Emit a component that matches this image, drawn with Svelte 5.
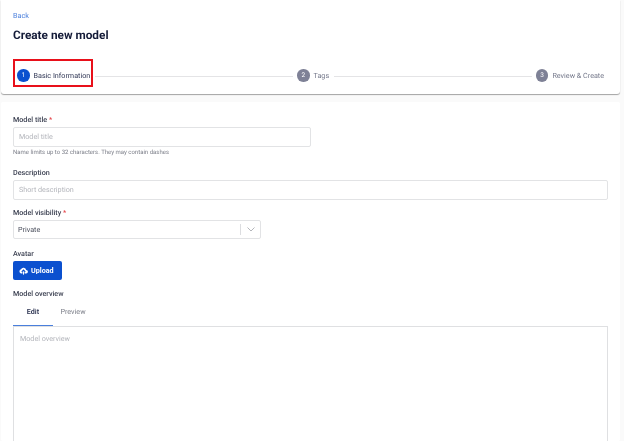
<script>
  const steps = [
    { n: 1, label: 'Basic Information', active: true },
    { n: 2, label: 'Tags' },
    { n: 3, label: 'Review & Create' }
  ]
</script>

<div class="page">
  <header class="head">
    <a class="back" href="#back">Back</a>
    <h1>Create new model</h1>
    <div class="stepper">
      {#each steps as step, i}
        {#if i > 0}<span class="line"></span>{/if}
        <div class="step" class:active={step.active}>
          <span class="num">{step.n}</span>
          <span class="label">{step.label}</span>
          {#if step.active}<span class="highlight"></span>{/if}
        </div>
      {/each}
    </div>
  </header>

  <main class="form">
    <div class="label-row">Model title <em>*</em></div>
    <div class="input title">Model title</div>
    <div class="hint">Name limits up to 32 characters. They may contain dashes</div>

    <div class="label-row desc">Description</div>
    <div class="input">Short description</div>

    <div class="label-row vis">Model visibility <em>*</em></div>
    <div class="select">
      <span class="value">Private</span>
      <span class="sep"></span>
      <svg class="chev" width="8" height="5" viewBox="0 0 8 5"><path d="M.5.5 4 4 7.5.5" fill="none" stroke="#b4b6bb" stroke-width="1"/></svg>
    </div>

    <div class="label-row avatar">Avatar</div>
    <button class="upload" type="button">
      <svg width="9" height="8" viewBox="0 0 24 22"><path d="M19.400 8A7.500 7.500 0 0 0 5.200 6.300 6 6 0 0 0 6 18h3v-5H5.500L12 6.500 18.500 13H15v5h4a5 5 0 0 0 .4-10z" fill="#fff"/><rect x="10.500" y="12" width="3" height="9" fill="#fff"/></svg>
      Upload
    </button>

    <div class="label-row overview">Model overview</div>
    <div class="tabs">
      <span class="tab on">Edit</span>
      <span class="tab">Preview</span>
    </div>
    <div class="editor">Model overview</div>
  </main>
</div>

<style>
  :global(body) {
    margin: 0;
    background: #fafafa;
    overflow: hidden;
  }

  .page {
    width: 624px;
    height: 441px;
    overflow: hidden;
    font-family: Roboto, "Liberation Sans", sans-serif;
    font-size: 7.2px;
    color: #3d4354;
    text-rendering: geometricPrecision;
    will-change: transform;
  }

  .head {
    width: 619px;
    height: 94px;
    margin-left: 1px;
    box-sizing: border-box;
    padding: 10.5px 16px 0 12px;
    background: #fff;
    border-radius: 0 0 3px 3px;
    box-shadow: 0 1px 1px rgba(0, 0, 0, 0.35);
  }

  .back {
    display: block;
    height: 10px;
    line-height: 10px;
    color: #4a7fdc;
    text-decoration: none;
    font-size: 7.2px;
  }

  h1 {
    margin: 6px 0 0;
    font-size: 11.8px;
    line-height: 16px;
    font-weight: 700;
    color: #141b38;
  }

  .stepper {
    display: flex;
    align-items: center;
    margin-top: 26.5px;
    padding-left: 4px;
  }

  .step {
    position: relative;
    display: flex;
    align-items: center;
    gap: 4px;
    color: #74788a;
  }

  .step.active {
    color: #2f3654;
  }

  .num {
    width: 12.5px;
    height: 12.5px;
    border-radius: 50%;
    background: #7e8196;
    color: #fff;
    font-size: 6.5px;
    display: flex;
    align-items: center;
    justify-content: center;
  }

  .active .num {
    background: #0b50cf;
  }

  .highlight {
    position: absolute;
    left: -4.5px;
    top: -10px;
    width: 76px;
    height: 24px;
    border: 2px solid #e8101a;
  }

  .line {
    flex: 1;
    height: 1.5px;
    margin: 2px 4px 0 5px;
    background: #e4e4e6;
  }

  .form {
    width: 619px;
    height: 339px;
    margin: 8px 0 0 1px;
    box-sizing: border-box;
    padding: 12px 12px 0;
    background: #fff;
    border-radius: 2px;
  }

  .label-row {
    height: 11px;
    line-height: 11px;
    color: #3a3f50;
    font-weight: 500;
  }

  .label-row em {
    color: #e5484d;
    font-style: normal;
  }

  .input {
    height: 20px;
    margin-top: 2px;
    box-sizing: border-box;
    padding-left: 5px;
    line-height: 18px;
    border: 1px solid #e2e3e5;
    border-radius: 2px;
    color: #b3b5bb;
  }

  .input.title {
    width: 298px;
  }

  .hint {
    margin-top: 2px;
    font-size: 6px;
    line-height: 8px;
    color: #7b7e88;
  }

  .desc {
    margin-top: 10px;
  }

  .vis {
    margin-top: 7px;
  }

  .select {
    width: 248px;
    height: 19px;
    margin-top: 2px;
    box-sizing: border-box;
    display: flex;
    align-items: center;
    padding: 0 5px 0 4px;
    border: 1px solid #e2e3e5;
    border-radius: 2px;
  }

  .value {
    flex: 1;
    color: #4a4e5c;
  }

  .sep {
    width: 1px;
    height: 11px;
    background: #dcdde0;
    margin-right: 6px;
  }

  .avatar {
    margin-top: 9px;
  }

  .upload {
    display: flex;
    align-items: center;
    gap: 3px;
    width: 49px;
    height: 19px;
    margin-top: 2px;
    padding: 0 0 0 6px;
    border: 0;
    border-radius: 2px;
    background: #0b50cf;
    color: #fff;
    font: 700 7.2px Roboto, "Liberation Sans", sans-serif;
  }

  .overview {
    margin-top: 8px;
  }

  .tabs {
    display: flex;
    height: 27px;
  }

  .tab {
    width: 40px;
    text-align: center;
    line-height: 26px;
    color: #7b7e88;
  }

  .tab.on {
    color: #2f3654;
    font-weight: 600;
    border-bottom: 1.5px solid #4a7fdc;
    box-sizing: border-box;
    height: 27px;
  }

  .editor {
    height: 200px;
    box-sizing: border-box;
    padding: 7px 6px;
    border: 1px solid #dfe0e2;
    color: #b3b5bb;
  }
</style>
